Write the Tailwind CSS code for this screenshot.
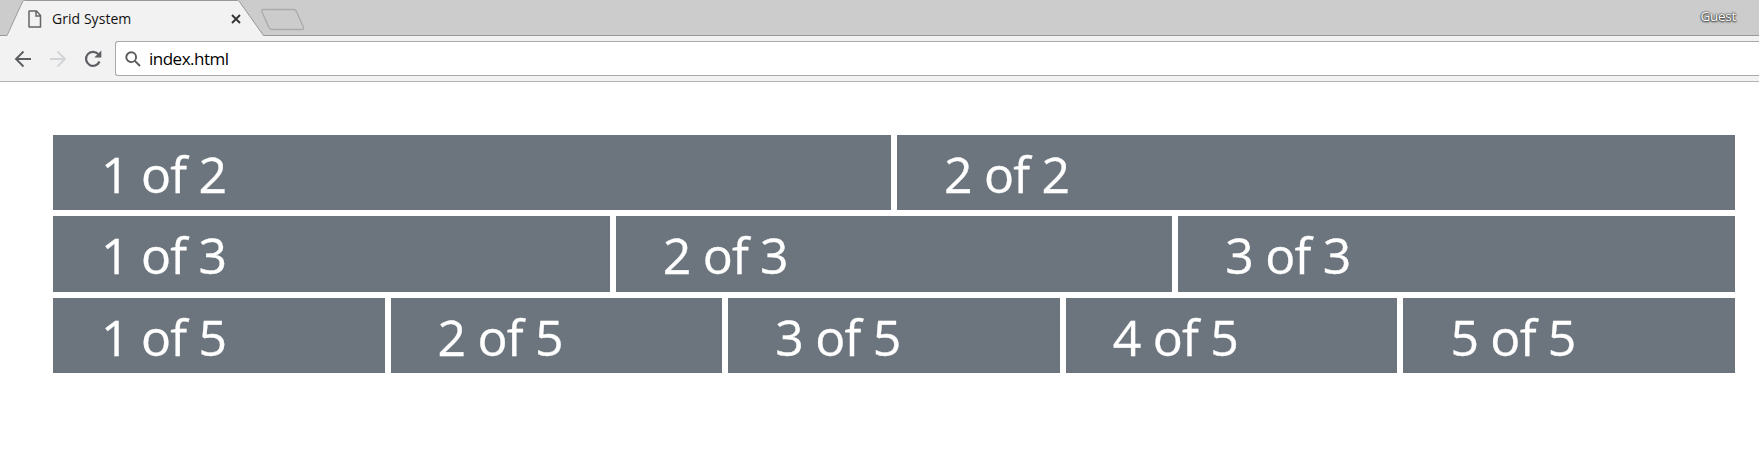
<!DOCTYPE html>
<html lang="en">
<head>
<meta charset="utf-8">
<title>Grid System</title>
<script src="https://cdn.jsdelivr.net/npm/@tailwindcss/browser@4"></script>
</head>
<body class="h-[457px] overflow-hidden bg-white font-['Open_Sans','Noto_Sans',sans-serif]">
<header>
  <div class="relative flex h-9 bg-[#cccccc]">
    <svg class="absolute inset-0 h-9 w-full" fill="none">
      <rect y="35" width="7" height="1" fill="#999"/>
      <path d="M6.500 35.500L22.500 1.800Q23 .5 24.500 .5H237.500Q239 .5 239.500 1.800L263.500 35.500" fill="#f2f2f2"/>
      <path d="M7 35.500L22.500 1.800Q23 .5 24.500 .5H237.500Q239 .5 239.500 1.800L263.500 35.500H1759" stroke="#999"/>
      <rect x="8" y="35" width="255" height="1" fill="#f2f2f2"/>
      <path d="M263.500 9.500H293.500Q295.500 9.500 296.300 11.300L303.300 27Q304.200 29.500 302 29.500H272Q270 29.500 269 27.500L261.800 11.500Q261 9.500 263.500 9.500Z" stroke="#aaa" stroke-width="1.300"/>
    </svg>
    <div class="relative flex h-9 w-full items-center pt-px pl-[28px]">
      <svg class="h-[18px] w-[14px]" viewBox="0 0 14 18" fill="none" stroke="#666" stroke-width="1.5"><path d="M1.500 1H8.500L12.500 5.500V17H1.500Q1 17 1 16.500V1.500Q1 1 1.500 1ZM8 1V6H12.500"/></svg>
      <span class="ml-[10px] w-[179px] text-[14px] leading-5 tracking-[0.05px] text-[#111]">Grid System</span>
      <svg class="h-[10px] w-[10px]" viewBox="0 0 10 10" stroke="#333" stroke-width="1.900"><path d="M1 1L9 9M9 1L1 9"/></svg>
      <span class="mr-[23px] mb-[5px] ml-auto text-[13.5px] leading-5 tracking-[-0.3px] text-white [text-shadow:0_0_1px_#333,0_0_2px_#333,0_1px_2px_#333]">Guest</span>
    </div>
  </div>
  <div class="flex h-[46px] items-start border-b border-[#b5b5b5] bg-[#f2f2f2] pt-[5px] pl-[14px]">
    <div class="flex h-[36px] w-[101px] items-center gap-[17px]">
      <svg class="h-[18px] w-[18px]" viewBox="0 0 18 18" fill="none" stroke="#5c5e62" stroke-width="1.900"><path d="M17 9H2M9.500 1.500L2 9L9.500 16.500"/></svg>
      <svg class="h-[18px] w-[18px]" viewBox="0 0 18 18" fill="none" stroke="#d3d4d5" stroke-width="1.900"><path d="M1 9H16M8.500 1.500L16 9L8.500 16.500"/></svg>
      <svg class="h-[18px] w-[18px]" viewBox="0 0 18 18"><path d="M14.200 4.100A7 7 0 1 0 15.500 11.500" fill="none" stroke="#5c5e62" stroke-width="2.200"/><path d="M17.300 .5V7.500H10.300Z" fill="#5c5e62"/></svg>
    </div>
    <div class="flex h-[35px] flex-1 items-center rounded-l-[3px] border border-r-0 border-[#a8a8a8] bg-white pl-[9px]">
      <svg class="h-4 w-4" viewBox="0 0 16 16" fill="none" stroke="#5a5a5a" stroke-width="1.900"><circle cx="6.200" cy="6.200" r="4.900"/><path d="M9.800 9.800L15 15"/></svg>
      <span class="ml-[8px] text-[17px] leading-6 tracking-[-0.500px] text-black">index.html</span>
    </div>
  </div>
</header>
<main class="flex flex-col gap-[6px] pt-[53px] pr-[24px] pl-[53px] text-[50px] leading-[71px] tracking-[-0.800px] text-white [-webkit-text-stroke:0.3px_white]">
  <div class="grid h-[75px] grid-cols-2 gap-[6px]">
    <div class="bg-[#6c757d] pt-1 pl-[48px]">1 of 2</div>
    <div class="bg-[#6c757d] pt-1 pl-[47px]">2 of 2</div>
  </div>
  <div class="grid h-[76px] grid-cols-3 gap-[6px]">
    <div class="bg-[#6c757d] pt-1 pl-[48px]">1 of 3</div>
    <div class="bg-[#6c757d] pt-1 pl-[47px]">2 of 3</div>
    <div class="bg-[#6c757d] pt-1 pl-[47px]">3 of 3</div>
  </div>
  <div class="grid h-[75px] grid-cols-5 gap-[6px]">
    <div class="bg-[#6c757d] pt-1 pl-[48px]">1 of 5</div>
    <div class="bg-[#6c757d] pt-1 pl-[47px]">2 of 5</div>
    <div class="bg-[#6c757d] pt-1 pl-[47px]">3 of 5</div>
    <div class="bg-[#6c757d] pt-1 pl-[47px]">4 of 5</div>
    <div class="bg-[#6c757d] pt-1 pl-[47px]">5 of 5</div>
  </div>
</main>
</body>
</html>
